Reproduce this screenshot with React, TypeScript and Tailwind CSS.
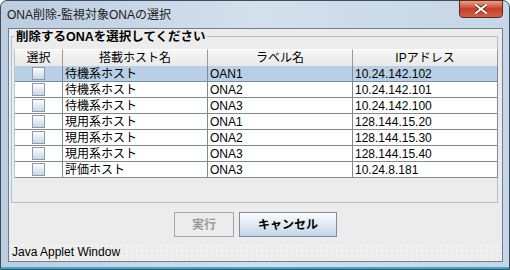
import React from 'react';

const rows = [
  { host: '待機系ホスト', label: 'OAN1', ip: '10.24.142.102', selected: true },
  { host: '待機系ホスト', label: 'ONA2', ip: '10.24.142.101' },
  { host: '待機系ホスト', label: 'ONA3', ip: '10.24.142.100' },
  { host: '現用系ホスト', label: 'ONA1', ip: '128.144.15.20' },
  { host: '現用系ホスト', label: 'ONA2', ip: '128.144.15.30' },
  { host: '現用系ホスト', label: 'ONA3', ip: '128.144.15.40' },
  { host: '評価ホスト', label: 'ONA3', ip: '10.24.8.181' },
];

function CheckBox() {
  return (
    <div className="w-[13px] h-[13px] border border-[#8e9aa8] bg-gradient-to-b from-[#fdfdfe] to-[#c9d8e8]" />
  );
}

export default function App() {
  return (
    <div
      className="w-[510px] h-[270px] flex flex-col rounded-t-[7px] border border-[#3d4e60] bg-gradient-to-r from-[#bccde0] via-[#d3e0ec] to-[#c6d6e6] text-[12px] text-black"
      style={{ fontFamily: '"Liberation Sans", "Noto Sans CJK JP", sans-serif' }}
    >
      {/* title bar */}
      <div className="h-[27px] flex items-start justify-between pl-[6px] pr-[6px]">
        <span className="mt-[5px] text-[12px] text-[#1b1b1b]">ONA削除-監視対象ONAの選択</span>
        <div className="w-[44px] h-[18px] -mt-[1px] flex items-center justify-center rounded-b-[4px] border border-[#5a2a22] bg-gradient-to-b from-[#e8a08a] via-[#c43f26] to-[#d4604a]">
          <svg width="12" height="10" viewBox="0 0 12 10">
            <path d="M1 1 L11 9 M11 1 L1 9" stroke="#5a2418" strokeWidth="3.4" strokeLinecap="square" />
            <path d="M1 1 L11 9 M11 1 L1 9" stroke="#ffffff" strokeWidth="2" strokeLinecap="square" />
          </svg>
        </div>
      </div>

      {/* client area */}
      <div className="ml-[7px] mr-[6px] flex-1 flex flex-col border border-[#6d7f92] bg-[#ececec]">
        {/* titled border */}
        <div className="relative mt-[7px] ml-[2px] mr-[4px] h-[167px] border border-[#a9c2da] pl-[2px] pr-[1px] pt-[12px]">
          <span className="absolute -top-[8px] left-[3px] bg-[#ececec] px-[1px] font-bold text-[12.5px] leading-[16px]">
            削除するONAを選択してください
          </span>
          <div className="grid grid-cols-[48px_145px_145px_145px] w-[483px] border-l border-[#c4c4c4]">
            {['選択', '搭載ホスト名', 'ラベル名', 'IPアドレス'].map((h) => (
              <div
                key={h}
                className="h-[17px] flex items-center justify-center border-r border-t border-t-white border-r-[#9a9a9a] bg-gradient-to-b from-[#f6f6f6] to-[#e9e9e9] leading-none"
              >
                {h}
              </div>
            ))}
            {rows.map((r, i) => (
              <React.Fragment key={i}>
                <div className={`h-[16px] flex items-center justify-center border-r border-b border-[#7c8a99] ${r.selected ? 'bg-[#b8cfe5]' : 'bg-white'}`}>
                  <CheckBox />
                </div>
                <div className={`h-[16px] flex items-center pl-[2px] border-r border-b border-[#7c8a99] leading-none ${r.selected ? 'bg-[#b8cfe5]' : 'bg-white'}`}>
                  {r.host}
                </div>
                <div className={`h-[16px] flex items-center pl-[2px] border-r border-b border-[#7c8a99] leading-none ${r.selected ? 'bg-[#b8cfe5]' : 'bg-white'}`}>
                  {r.label}
                </div>
                <div className={`h-[16px] flex items-center pl-[2px] border-r border-b border-[#7c8a99] leading-none ${r.selected ? 'bg-[#b8cfe5]' : 'bg-white'}`}>
                  {r.ip}
                </div>
              </React.Fragment>
            ))}
          </div>
        </div>

        {/* buttons */}
        <div className="mt-[9px] flex justify-center gap-[5px]">
          <button className="w-[60px] h-[25px] border border-[#a6a6a6] bg-[#ececec] font-bold text-[#9a9a9a]">
            実行
          </button>
          <button className="w-[98px] h-[25px] border border-[#7c8da0] bg-gradient-to-b from-[#fbfcfd] to-[#c5d6e8] font-bold">
            キャンセル
          </button>
        </div>

        {/* footer */}
        <div className="mt-auto h-[18px] flex items-center pl-[3px] bg-[#ececec] bg-[radial-gradient(#f8f8f8_1px,transparent_1px)] bg-[length:5px_5px]">
          <span className="text-[12px]">Java Applet Window</span>
        </div>
      </div>

      {/* bottom frame */}
      <div className="h-[7px] border-b-[2px] border-[#39a9cf]" />
    </div>
  );
}
